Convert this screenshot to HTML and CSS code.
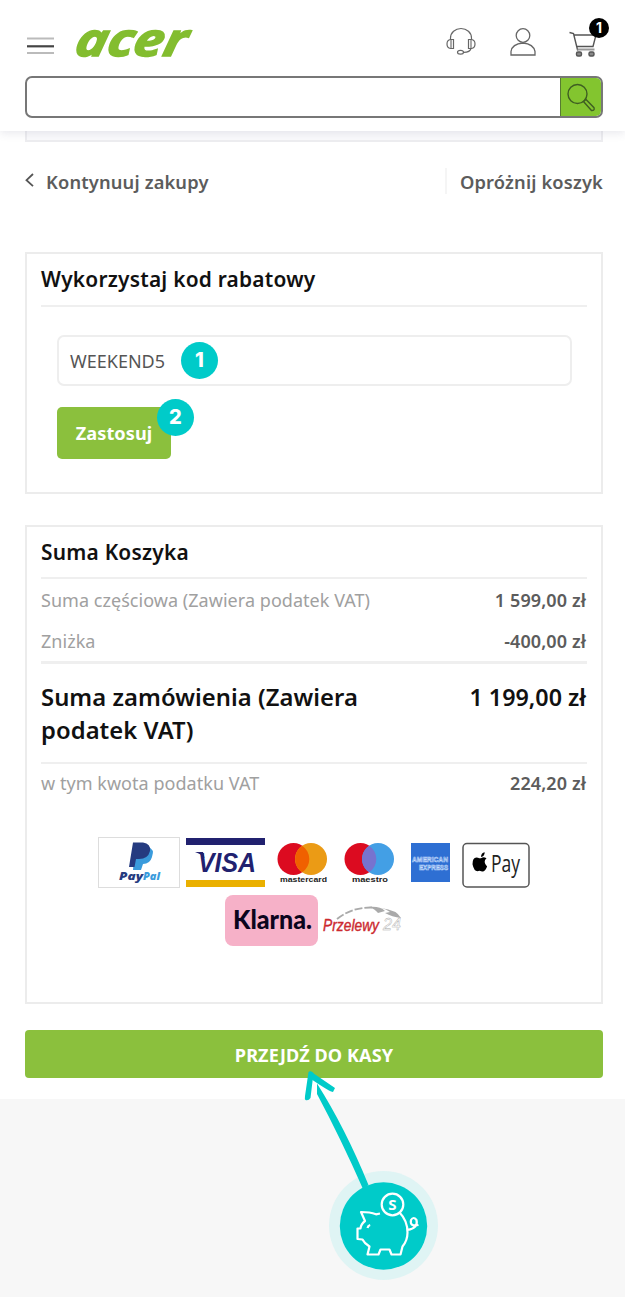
FILE: index.html
```html
<!DOCTYPE html>
<html lang="pl">
<head>
<meta charset="utf-8">
<title>Koszyk</title>
<link rel="stylesheet" href="styles.css">
</head>
<body>
<header class="header">
  <div class="topbar">
    <svg class="menu" width="28" height="18" viewBox="0 0 28 18"><path d="M0 1.500h27M0 16h27" stroke="#bbb" stroke-width="2"/><path d="M0 9.300h27" stroke="#444" stroke-width="2.200"/></svg>
    <svg class="logo" width="118" height="52" viewBox="0 -18 118 52"><text x="0" y="32" textLength="111" lengthAdjust="spacingAndGlyphs" transform="translate(5 0) skewX(-12)">acer</text></svg>
    <div class="tools">
      <svg width="32" height="30" viewBox="0 0 32 30" fill="none" stroke="#666" stroke-width="1.200"><path d="M5.500 13V11a10.500 9.500 0 0 1 21 0v2"/><path d="M8.500 12.500v9H5.500Q2 21 2 17t3.500-4.500zM23.500 12.500v9h3Q30 21 30 17t-3.500-4.500z"/><path d="M6 13v8M26 13v8" stroke="#aaa" stroke-width="2"/><path d="M26 21.500q-1 4-8 3.800"/><ellipse cx="15.500" cy="25.300" rx="3" ry="1.900"/></svg>
      <svg width="28" height="30" viewBox="0 0 28 30" fill="none" stroke="#666" stroke-width="1.300"><circle cx="14" cy="8.500" r="6.800"/><path d="M2 28V24.500q1-7.500 12-8.500 10.500 1 12 8.500V28z"/></svg>
      <div class="cart">
        <svg width="30" height="30" viewBox="0 0 30 30" fill="none" stroke="#555" stroke-width="1.400"><path d="M.5 5.500l4 1 4.200 17M5 8h22l-3 11.500H7.500"/><path d="M8.500 22.500h17" stroke="#999" stroke-width="2"/><rect x="7.500" y="25" width="5" height="4" rx="1.500" fill="#888"/><rect x="20" y="25" width="5" height="4" rx="1.500" fill="#888"/></svg>
        <span class="cart-count">1</span>
      </div>
    </div>
  </div>
  <div class="search">
    <div class="search-field"></div>
    <div class="search-button"><svg width="30" height="30" viewBox="0 0 30 30" fill="none" stroke="#3f5f22" stroke-width="1.400"><circle cx="11.500" cy="11" r="9.500"/><path d="M17.500 18.500l2.500-2 8 8.200q1 3-2.500 2.800z"/></svg></div>
  </div>
</header>
<main class="page">
  <div class="previous-panel"></div>
  <nav class="links">
    <a class="back"><svg width="10" height="14" viewBox="0 0 10 14"><path d="M8 1L1.500 7.200l6.500 6" fill="none" stroke="#555" stroke-width="1.800"/></svg><span>Kontynuuj zakupy</span></a>
    <a class="clear"><span>Opróżnij koszyk</span></a>
  </nav>
  <section class="card coupon">
    <h2 class="title t-coupon">Wykorzystaj kod rabatowy</h2>
    <div class="form">
      <div class="input"><span class="code">WEEKEND5</span><span class="step">1</span></div>
      <div class="apply"><span>Zastosuj</span><span class="step step-two">2</span></div>
    </div>
  </section>
  <section class="card summary">
    <h2 class="title t-summary">Suma Koszyka</h2>
    <div class="row subtotal"><span class="label">Suma częściowa (Zawiera podatek VAT)</span><span class="value">1 599,00 zł</span></div>
    <div class="row discount"><span class="label l-discount">Zniżka</span><span class="value">-400,00 zł</span></div>
    <div class="row total"><span class="total-label">Suma zamówienia (Zawiera<br>podatek VAT)</span><span>1 199,00 zł</span></div>
    <div class="row tax"><span class="label l-tax">w tym kwota podatku VAT</span><span class="value">224,20 zł</span></div>
    <div class="payments">
      <div class="pay-line">
        <svg width="82" height="51" viewBox="0 0 82 51"><rect x=".5" y=".5" width="81" height="50" fill="#fff" stroke="#ddd"/><path d="M37 10h13q7 2 4 10-2 7-9 7l-2 6h-8z" fill="#3a9bdc"/><path d="M35 5.500h10q8 1 7 8.500-2 8-11 8h-3l-1.500 8H31z" fill="#253b80"/><text x="21" y="43" class="paypal" textLength="24" lengthAdjust="spacingAndGlyphs" fill="#253b80">Pay</text><text x="45" y="43" class="paypal" textLength="17" lengthAdjust="spacingAndGlyphs" fill="#3a9bdc">Pal</text></svg>
        <svg class="visa" width="80" height="51" viewBox="0 0 80 51"><path d="M0 1h79v7H0z" fill="#21216f"/><path d="M0 43h79v7H0z" fill="#eab000"/><text x="12" y="35" textLength="58" lengthAdjust="spacingAndGlyphs">VISA</text><path d="M9 15h8l1.500 6q-3-4-9.500-6z" fill="#21216f"/></svg>
        <svg class="mastercard" width="52" height="51" viewBox="0 0 52 51"><circle cx="16.500" cy="22" r="16" fill="#dc0b20"/><circle cx="34" cy="22" r="16" fill="#eb9b15"/><path d="M25.200 8.700a16 16 0 0 1 0 26.600 16 16 0 0 1 0-26.600" fill="#f06000"/><text x="3" y="45" class="brand-name" textLength="47" lengthAdjust="spacingAndGlyphs">mastercard</text></svg>
        <svg class="maestro" width="52" height="51" viewBox="0 0 52 51"><circle cx="16.500" cy="22" r="16" fill="#dc0b20"/><circle cx="34" cy="22" r="16" fill="#439fe5"/><path d="M25.200 8.700a16 16 0 0 1 0 26.600 16 16 0 0 1 0-26.600" fill="#7773cf"/><text x="8" y="45" class="brand-name" textLength="36" lengthAdjust="spacingAndGlyphs">maestro</text></svg>
        <svg class="amex" width="40" height="51" viewBox="0 0 40 51"><path d="M0 6h39v39H0z" fill="#2e6fd3"/><text x="1" y="25" textLength="36" lengthAdjust="spacingAndGlyphs">AMERICAN</text><text x="8" y="33" textLength="29" lengthAdjust="spacingAndGlyphs">EXPRESS</text></svg>
        <svg class="apple" width="68" height="51" viewBox="0 0 68 51"><rect x="1" y="6.500" width="66" height="43.500" rx="4" fill="#fff" stroke="#555" stroke-width="1.500"/><path d="M17 21q2-1.500 5 .3-4 3.500.6 8.200-2.400 6.200-5.800 4.700-2-.8-3.800 0-3.500 0-5-7 0-8 5.500-6.500 2 1 3.500.3zM16.500 20q0-4 3.700-4.700 0 4-3.700 4.700z" transform="translate(2.500)"/><text x="29" y="35" textLength="29" lengthAdjust="spacingAndGlyphs">Pay</text></svg>
      </div>
      <div class="pay-line">
        <div class="klarna"><svg width="93" height="51" viewBox="0 0 93 51"><text x="8" y="34" textLength="79" lengthAdjust="spacingAndGlyphs">Klarna.</text></svg></div>
        <svg class="p24" width="82" height="51" viewBox="0 0 82 51"><path d="M15 24Q30 12 50 12.500" fill="none" stroke="#aaa" stroke-width="1.800" stroke-dasharray="8 2"/><path d="M47 12q11-1 16 4l-7 2q-3-4-9-6zM59 13q16 2 20 10-9-1-16-5l5-1q-4-3-9-4z" fill="#aaa"/><text x="1" y="36" textLength="56" lengthAdjust="spacingAndGlyphs" fill="#cc292f" stroke="#cc292f">Przelewy</text><text x="61" y="35" textLength="18" lengthAdjust="spacingAndGlyphs" fill="#fff" stroke="#aaa">24</text></svg>
      </div>
    </div>
  </section>
  <div class="checkout"><span>PRZEJDŹ DO KASY</span></div>
</main>
<footer class="footer"></footer>
<svg class="savings" width="140" height="217" viewBox="300 1070 140 217" fill="none"><circle cx="383.500" cy="1225.500" r="54.500" fill="#dff4f4"/><circle cx="383.500" cy="1226" r="43.700" fill="#00cbc9"/><g fill="#00cbc9"><path d="M308.500 1072q2-2 5 1l-3 25q-2 3-5 2-1-1-.5-4z"/><path d="M309 1072q2-1 4 1l22 15-2 4q-3 0-22-13z"/><path d="M317 1083.500q28 44 51.500 101.500l-5.500 4q-22-50-46-95z"/></g><g stroke="#fff" stroke-width="2.200" stroke-linejoin="round"><circle cx="392.500" cy="1204.500" r="10.800"/><path d="M380 1213.500l-4 .8q-6-2.300-15-2.300l4 9q-4 3-4.500 7.500h-3v10.500l5 .5q2 4 7 7l-2 8h11l2-5h9l2 5h9l2-8q5-6 5-14 0-12-8-20M407.500 1230q11-2 9-10-3-4-5.500 0-1.500 7 7.500 5"/><path d="M367.500 1228q.5-2.500 2.700-3"/></g><text x="392.500" y="1210" text-anchor="middle" class="coin">S</text></svg>
</body>
</html>
```
FILE: styles.css
```css
* { box-sizing: border-box; }
body { margin: 0; width: 625px; height: 1297px; display: flex; flex-direction: column; position: relative; overflow: hidden; background: #fff; font-family: "Noto Sans", sans-serif; color: #111; }
svg { display: block; flex: none; overflow: visible; }
.header { height: 131px; padding: 24px 22px 0 25px; box-shadow: 0 2px 9px rgba(60, 60, 100, .12); z-index: 1; background: #fff; }
.topbar { height: 52px; display: flex; align-items: flex-start; }
.menu { margin: 13px 20px 0 2px; }
.logo { margin-top: -18px; }
.logo text { font: italic bold 46px "Open Sans", sans-serif; fill: #83bd2f; stroke: #83bd2f; stroke-width: 1.5; }
.tools { display: flex; margin: 3px 4px 0 auto; gap: 32px; }
.cart { position: relative; }
.cart-count { position: absolute; top: -9px; left: 20px; width: 20px; height: 20px; border-radius: 50%; background: #000; color: #fff; font: bold 14px/20px Inter, sans-serif; text-align: center; }
.search { display: flex; height: 42px; border: 2px solid #777; border-radius: 7px; overflow: hidden; }
.search-field { flex: 1; }
.search-button { width: 41px; border-left: 1px solid #577b31; background: #83c52f; padding: 5px 5px; }
.page { height: 968px; flex: none; padding: 0 22px 0 25px; display: flex; flex-direction: column; }
.previous-panel { height: 11px; flex: none; border: 2px solid #ededf0; border-top: 0; background: #fafafc; }
.links { height: 110px; flex: none; padding-top: 24px; display: flex; justify-content: space-between; font-size: 18.3px; letter-spacing: .15px; font-weight: 600; line-height: 31px; color: #5c5c5c; }
.back { display: flex; gap: 11px; }
.back svg { margin-top: 7px; }
.clear { height: 26px; margin-top: 2px; border-left: 2px solid #f5f5f5; padding-left: 13px; line-height: 27px; }
.card { border: 2px solid #ececec; padding: 1px 15px; flex: none; }
.title { margin: 0 -1px; height: 52px; border-bottom: 2px solid #efefef; font-size: 20.9px; letter-spacing: .22px; line-height: 49px; font-weight: 600; color: #111; }
.coupon { height: 242px; margin-bottom: 31px; }
.form { padding: 28px 14px 0 15px; }
.input { height: 51px; border: 2px solid #eee; border-radius: 7px; padding-left: 11px; display: flex; align-items: center; color: #555; font-size: 18px; }
.code { width: 95px; }
.step { width: 37px; height: 37px; flex: none; border-radius: 50%; background: #00cbc9; color: #fff; font: 800 20px/37px Inter, sans-serif; text-align: center; }
.input .step { margin-left: 16px; }
.apply { position: relative; width: 114px; height: 52px; margin-top: 21px; border-radius: 5px; background: #8bc03d; color: #fff; font-weight: 700; font-size: 18.2px; letter-spacing: .05px; line-height: 53px; text-align: center; }
.step-two { position: absolute; left: 100px; top: -8px; letter-spacing: 0; }
.summary { height: 479px; margin-bottom: 26px; }
.t-summary { height: 51px; }
.row { margin: 0 -1px; padding-right: 1px; display: flex; justify-content: space-between; font-size: 18px; }
.label { color: #a0a0a0; letter-spacing: .04px; }
.value { font-weight: 600; color: #5c5c5c; letter-spacing: .1px; }
.subtotal { height: 42px; line-height: 43px; }
.discount { height: 43px; line-height: 41px; border-bottom: 3px solid #efefef; }
.total { height: 100px; padding-top: 17px; font-size: 23.3px; font-weight: 600; line-height: 33px; border-bottom: 2px solid #efefef; }
.total-label { font-size: 23.8px; letter-spacing: .05px; }
.tax { height: 73px; line-height: 38px; }
.payments { display: flex; flex-direction: column; gap: 7px; }
.pay-line { display: flex; justify-content: center; height: 51px; }
.visa { margin-left: 6px; }
.mastercard { margin-left: 11px; }
.maestro { margin-left: 15px; }
.amex { margin-left: 15px; }
.apple { margin-left: 11px; }
.paypal { font: italic 800 11px "Open Sans", sans-serif; }
.visa text { font: italic bold 28px "Liberation Sans", sans-serif; fill: #21216f; }
.brand-name { font: bold 7px "Liberation Sans", sans-serif; fill: #222; }
.amex text { font: bold 8px "Liberation Sans", sans-serif; fill: #2e6fd3; stroke: #c5dcfb; stroke-width: .6; }
.apple text { font: 23px "Open Sans", sans-serif; fill: #222; }
.klarna { width: 93px; height: 51px; border-radius: 8px; background: #f6b1c8; }
.klarna text { font: 900 26px Lato, sans-serif; fill: #0b051d; }
.p24 { margin-left: 4px; }
.p24 text { font: italic 16px "Liberation Sans", sans-serif; stroke-width: .4; }
.checkout { height: 48px; flex: none; border-radius: 4px; background: #8bc03d; color: #fff; text-align: center; font-size: 18.1px; letter-spacing: .08px; font-weight: 700; line-height: 51px; }
.footer { height: 198px; flex: none; background: #f7f7f7; }
.savings { position: absolute; left: 300px; top: 1070px; }
.coin { font: bold 15px "Open Sans", sans-serif; fill: #fff; }
```
